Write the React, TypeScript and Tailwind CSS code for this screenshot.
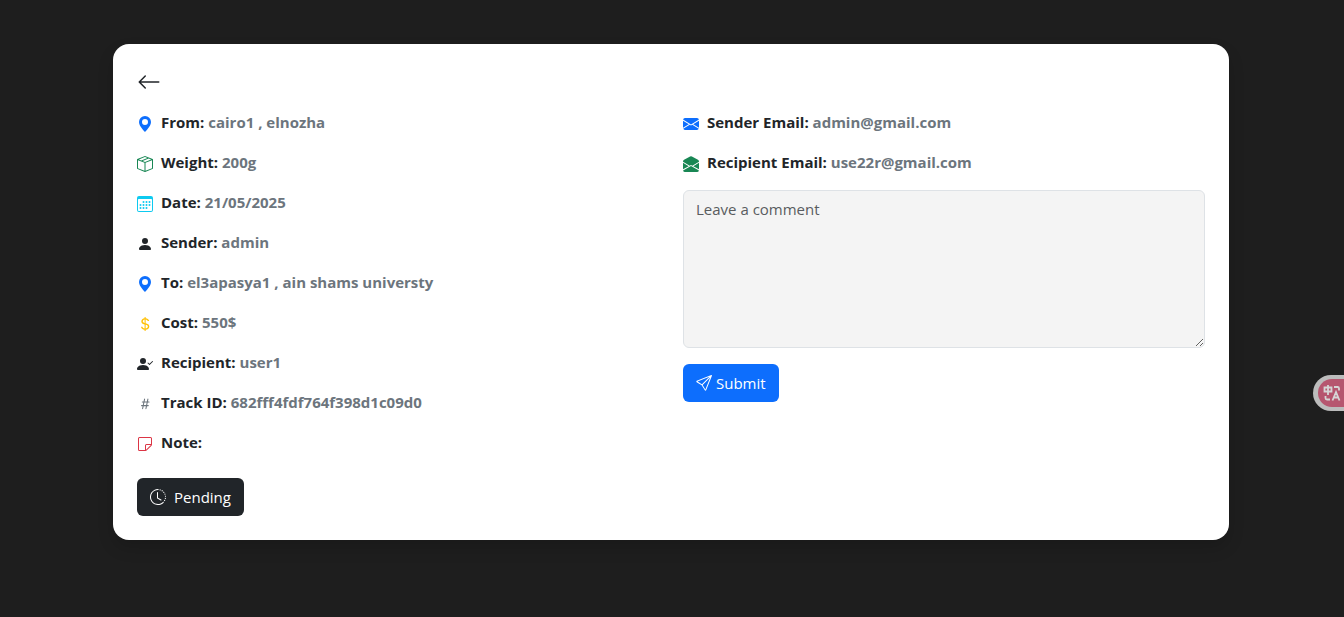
import type { ReactNode } from "react";
import {
  BsArrowLeft,
  BsBoxSeam,
  BsCalendar3,
  BsClockHistory,
  BsCurrencyDollar,
  BsEnvelopeFill,
  BsEnvelopeOpenFill,
  BsGeoAltFill,
  BsHash,
  BsPersonCheckFill,
  BsPersonFill,
  BsSend,
  BsSticky,
} from "react-icons/bs";

function Field({ icon, label, value }: { icon: ReactNode; label: string; value?: string }) {
  return (
    <p className="flex items-center gap-2 text-[15px] leading-6 font-bold text-[#212529]">
      <span className="shrink-0 pt-1 text-base">{icon}</span>
      <span>
        {label}: {value && <span className="text-[#6c757d]">{value}</span>}
      </span>
    </p>
  );
}

function TranslateTab() {
  return (
    <button
      type="button"
      aria-label="Translate"
      className="fixed top-[375px] right-0 flex h-9 items-center rounded-l-full bg-[#bcbcbc] pl-[5px]"
    >
      <span className="flex h-7 w-[26px] items-center overflow-hidden rounded-l-full bg-[#b6566f]">
        <svg viewBox="0 0 26 28" className="h-7 w-[26px] shrink-0" fill="none" stroke="#d6d6d6" strokeWidth="1.8">
          <path d="M6.500 8.500h7v4h-7zM10 6v10M16 8h3.500q1.500 0 1.500 1.500v2M7.500 17v2q0 1.500 1.500 1.500h3M14.500 21.500l3.500-8.500 3.500 8.500M16 18.500h4" />
        </svg>
      </span>
    </button>
  );
}

export default function App() {
  return (
    <div className="min-h-screen bg-[#1e1e1e] py-11 pr-3.5 pl-3 font-['Open_Sans','Noto_Sans',sans-serif] text-base">
      <main className="mx-auto max-w-[1116px] rounded-2xl bg-white p-6 shadow-[0_8px_16px_rgba(0,0,0,0.15)]">
        <a href="#back" aria-label="Back" className="mb-3.5 flex h-7 w-6 items-center text-2xl text-[#212529]">
          <BsArrowLeft />
        </a>
        <div className="grid gap-6 md:grid-cols-2">
          <section className="flex flex-col gap-4">
            <Field icon={<BsGeoAltFill className="text-[#0d6efd]" />} label="From" value="cairo1 , elnozha" />
            <Field icon={<BsBoxSeam className="text-[#198754]" />} label="Weight" value="200g" />
            <Field icon={<BsCalendar3 className="text-[#0dcaf0]" />} label="Date" value="21/05/2025" />
            <Field icon={<BsPersonFill />} label="Sender" value="admin" />
            <Field icon={<BsGeoAltFill className="text-[#0d6efd]" />} label="To" value="el3apasya1 , ain shams universty" />
            <Field icon={<BsCurrencyDollar className="text-[#ffc107]" />} label="Cost" value="550$" />
            <Field icon={<BsPersonCheckFill />} label="Recipient" value="user1" />
            <Field icon={<BsHash className="text-[#6c757d]" />} label="Track ID" value="682fff4fdf764f398d1c09d0" />
            <Field icon={<BsSticky className="text-[#dc3545]" />} label="Note" />
            <button
              type="button"
              className="mt-2 flex h-[38px] items-center gap-2 self-start rounded-md bg-[#212529] px-[13px] text-[15px] text-white"
            >
              <BsClockHistory className="size-4" />
              Pending
            </button>
          </section>
          <section className="flex flex-col gap-4">
            <Field icon={<BsEnvelopeFill className="text-[#0d6efd]" />} label="Sender Email" value="admin@gmail.com" />
            <Field icon={<BsEnvelopeOpenFill className="text-[#198754]" />} label="Recipient Email" value="use22r@gmail.com" />
            <form className="flex flex-col items-start gap-4">
              <textarea
                aria-label="Comment"
                placeholder="Leave a comment"
                className="block h-[158px] w-full rounded-md border border-[#dee2e6] bg-[#f4f4f4] px-3 py-1.5 text-[15px] leading-6 text-[#212529] placeholder:text-[#595c5f]"
              />
              <button
                type="button"
                className="flex h-[38px] items-center gap-1 rounded-md bg-[#0d6efd] px-[13px] text-[15px] text-white"
              >
                <BsSend className="size-4" />
                Submit
              </button>
            </form>
          </section>
        </div>
      </main>
      <TranslateTab />
    </div>
  );
}
